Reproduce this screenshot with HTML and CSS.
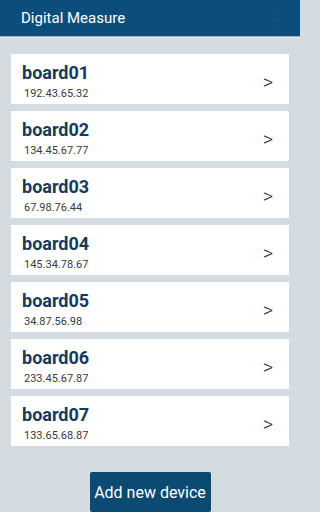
FILE: index.html
```html
<!DOCTYPE html>
<html>
<head>
<meta charset="utf-8">
<link rel="stylesheet" href="styles.css">
</head>
<body>
<div class="app">
  <header class="bar">
    <span class="bar-title">Digital Measure</span>
    <span class="overflow"><i></i><i></i><i></i></span>
  </header>
  <main class="list">
    <div class="card"><div class="info"><div class="name">board01</div><div class="ip">192.43.65.32</div></div><span class="arrow">&gt;</span></div>
    <div class="card"><div class="info"><div class="name">board02</div><div class="ip">134.45.67.77</div></div><span class="arrow">&gt;</span></div>
    <div class="card"><div class="info"><div class="name">board03</div><div class="ip">67.98.76.44</div></div><span class="arrow">&gt;</span></div>
    <div class="card"><div class="info"><div class="name">board04</div><div class="ip">145.34.78.67</div></div><span class="arrow">&gt;</span></div>
    <div class="card"><div class="info"><div class="name">board05</div><div class="ip">34.87.56.98</div></div><span class="arrow">&gt;</span></div>
    <div class="card"><div class="info"><div class="name">board06</div><div class="ip">233.45.67.87</div></div><span class="arrow">&gt;</span></div>
    <div class="card"><div class="info"><div class="name">board07</div><div class="ip">133.65.68.87</div></div><span class="arrow">&gt;</span></div>
  </main>
  <div class="actions"><button class="add">Add new device</button></div>
</div>
</body>
</html>
```
FILE: styles.css
```css
html, body {
  margin: 0;
  padding: 0;
}
body {
  background: #d5dce1;
  font-family: Roboto, "Liberation Sans", sans-serif;
  overflow: hidden;
}
.app {
  width: 300px;
  height: 512px;
  overflow: hidden;
}
.bar {
  height: 36px;
  background: #0c4e7b;
  display: flex;
  align-items: center;
  justify-content: space-between;
  padding: 0 22px 0 21px;
  box-shadow: 0 1px 0 #9fb2c1, 0 2px 1px #e3e9ed;
}
.bar-title {
  color: #ffffff;
  font-size: 15px;
  line-height: 37px;
}
.overflow {
  display: flex;
  flex-direction: column;
  gap: 4px;
  margin-top: 2px;
}
.overflow i {
  display: block;
  width: 3px;
  height: 3px;
  border-radius: 50%;
  background: #28506d;
}
.list {
  padding: 18px 11px 0;
  display: flex;
  flex-direction: column;
  gap: 7px;
}
.card {
  background: #ffffff;
  height: 50px;
  display: flex;
  justify-content: space-between;
  padding: 0 16px 0 11px;
  box-sizing: border-box;
}
.info {
  padding-top: 9px;
}
.name {
  font-size: 18px;
  font-weight: bold;
  line-height: 20px;
  color: #173a5c;
}
.ip {
  font-size: 11px;
  line-height: 16px;
  margin-top: 3px;
  padding-left: 2px;
  color: #3a3a3a;
}
.arrow {
  font-size: 20px;
  font-weight: 300;
  color: #1d2c44;
  align-self: center;
  padding-top: 5px;
}
.actions {
  display: flex;
  justify-content: center;
  margin-top: 26px;
}
.add {
  width: 121px;
  height: 40px;
  background: #0b4a72;
  color: #ffffff;
  border: none;
  border-radius: 2px;
  font-family: Roboto, "Liberation Sans", sans-serif;
  font-size: 16px;
  padding: 0;
}
```
